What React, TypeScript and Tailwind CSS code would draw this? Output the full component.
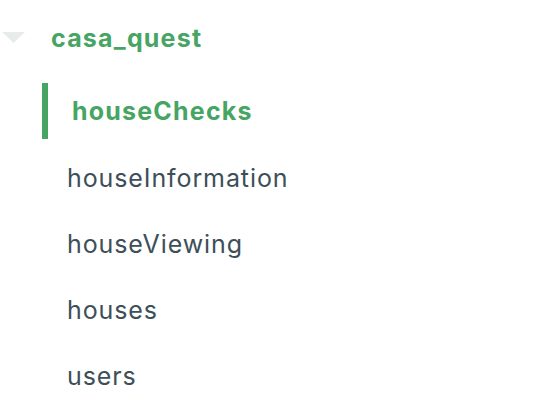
import React from "react";

const items = ["houseInformation", "houseViewing", "houses", "users"];

export default function App() {
  return (
    <div className="w-[540px] h-[407px] bg-white overflow-hidden" style={{ fontFamily: "Inter, 'Open Sans', sans-serif" }}>
      <div className="flex items-center h-[50px] pt-[26px]">
        <svg width="23" height="12" viewBox="0 0 23 12" className="ml-[2px]">
          <polygon points="0,0 23,0 11.5,11" fill="#e8ebeb" />
        </svg>
        <span className="ml-[26px] text-[25px] font-bold tracking-[1.2px] text-[#47a563] leading-none">casa_quest</span>
      </div>
      <div className="flex items-center h-[56px] mt-[33px] ml-[42px] border-l-[6px] border-[#47a563]">
        <span className="ml-[24px] text-[25px] font-bold tracking-[1.2px] text-[#47a563] leading-none">houseChecks</span>
      </div>
      <div className="flex flex-col mt-[6px]">
        {items.map((t) => (
          <div key={t} className="flex items-center h-[66px] pl-[67px]">
            <span className="text-[25px] tracking-[0.9px] text-[#3d4f58] leading-none">{t}</span>
          </div>
        ))}
      </div>
    </div>
  );
}
